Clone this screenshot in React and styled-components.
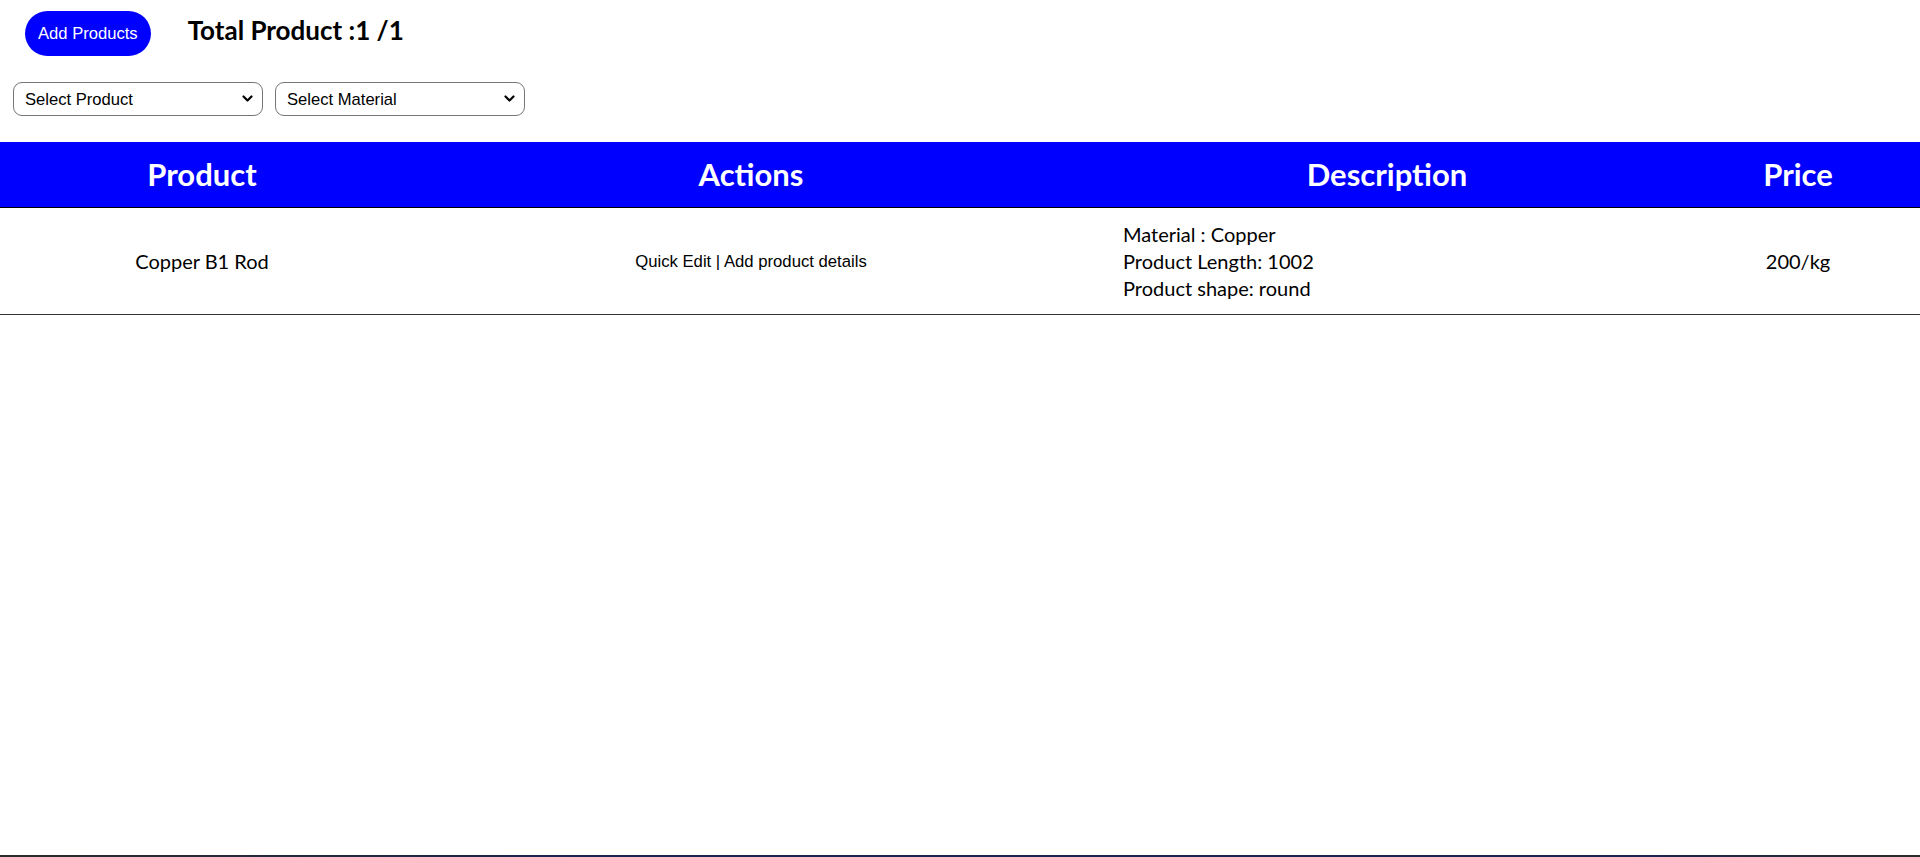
import React from "react";
import styled, { createGlobalStyle } from "styled-components";

const GlobalStyle = createGlobalStyle`
  html, body { margin: 0; padding: 0; background: #ffffff; }
  body { font-family: "Liberation Sans", Arial, sans-serif; color: #000; }
  * { box-sizing: border-box; }
`;

const Page = styled.div`
  display: flex;
  flex-direction: column;
  min-height: 857px;
`;

const Main = styled.main`
  min-height: 855px;
  display: flex;
  flex-direction: column;
`;

const TopBar = styled.div`
  display: flex;
  align-items: center;
  gap: 37px;
  padding: 11px 0 0 25px;
  height: 56px;
`;

const PillButton = styled.button`
  height: 45px;
  padding: 0 13px;
  border: none;
  border-radius: 23px;
  background: #0000ff;
  color: #ffffff;
  font-family: "Liberation Sans", Arial, sans-serif;
  font-size: 16.6px;
  cursor: pointer;
`;

const Counter = styled.h2`
  margin: 0 0 7px 0;
  font-family: Lato, "Noto Sans", sans-serif;
  font-weight: 700;
  font-size: 26px;
  color: #000;
`;

const FilterRow = styled.div`
  display: flex;
  gap: 12px;
  padding: 26px 0 0 13px;
`;

const SelectWrap = styled.div`
  position: relative;
  width: 250px;
  height: 34px;
`;

const Select = styled.select`
  appearance: none;
  -webkit-appearance: none;
  width: 100%;
  height: 100%;
  border: 1px solid #767676;
  border-radius: 9px;
  background: #fff;
  padding: 0 30px 0 11px;
  font-family: "Liberation Sans", Arial, sans-serif;
  font-size: 16.6px;
  color: #000;
  outline: none;
`;

const Chevron = styled.svg`
  position: absolute;
  right: 10px;
  top: 12px;
  width: 11px;
  height: 9px;
  pointer-events: none;
`;

const Table = styled.div`
  margin-top: 26px;
  display: flex;
  flex-direction: column;
`;

const Row = styled.div`
  display: grid;
  grid-template-columns: 404fr 694fr 578fr 244fr;
  border-bottom: 1px solid ${(p) => (p.$head ? "#000" : "#333")};
  background: ${(p) => (p.$head ? "#0000ff" : "#fff")};
  min-height: ${(p) => (p.$head ? "66px" : "107px")};
`;

const HeadCell = styled.div`
  display: flex;
  align-items: center;
  justify-content: center;
  color: #fff;
  font-family: Lato, "Noto Sans", sans-serif;
  font-weight: 700;
  font-size: 31px;
  padding-bottom: 2px;
`;

const Cell = styled.div`
  display: flex;
  align-items: center;
  justify-content: ${(p) => (p.$left ? "flex-start" : "center")};
  padding-left: ${(p) => (p.$left ? "25px" : "0")};
  padding-top: ${(p) => (p.$arial ? "2px" : "0")};
  font-family: ${(p) =>
    p.$arial ? '"Liberation Sans", Arial, sans-serif' : 'Lato, "Noto Sans", sans-serif'};
  font-size: ${(p) => (p.$arial ? "16.7px" : "20px")};
  color: #000;
`;

const Lines = styled.div`
  display: flex;
  flex-direction: column;
  line-height: 27px;
`;

const Footer = styled.footer`
  height: 2px;
  background: linear-gradient(90deg, #2c2c2c 0%, #1c2450 30%, #1c2450 85%, #2c2c2c 100%);
`;

function DropDown({ label }) {
  return (
    <SelectWrap>
      <Select defaultValue="">
        <option value="">{label}</option>
      </Select>
      <Chevron viewBox="0 0 11 9">
        <path d="M1.5 2.5 L5.5 6.5 L9.5 2.5" fill="none" stroke="#000" strokeWidth="2.2" strokeLinecap="round" strokeLinejoin="round" />
      </Chevron>
    </SelectWrap>
  );
}

export default function App() {
  return (
    <Page>
      <GlobalStyle />
      <Main>
        <TopBar>
          <PillButton>Add Products</PillButton>
          <Counter>Total Product :1 /1</Counter>
        </TopBar>
        <FilterRow>
          <DropDown label="Select Product" />
          <DropDown label="Select Material" />
        </FilterRow>
        <Table>
          <Row $head>
            <HeadCell>Product</HeadCell>
            <HeadCell>Actions</HeadCell>
            <HeadCell>Description</HeadCell>
            <HeadCell>Price</HeadCell>
          </Row>
          <Row>
            <Cell>Copper B1 Rod</Cell>
            <Cell $arial>Quick Edit | Add product details</Cell>
            <Cell $left>
              <Lines>
                <span>Material : Copper</span>
                <span>Product Length: 1002</span>
                <span>Product shape: round</span>
              </Lines>
            </Cell>
            <Cell>200/kg</Cell>
          </Row>
        </Table>
      </Main>
      <Footer />
    </Page>
  );
}
